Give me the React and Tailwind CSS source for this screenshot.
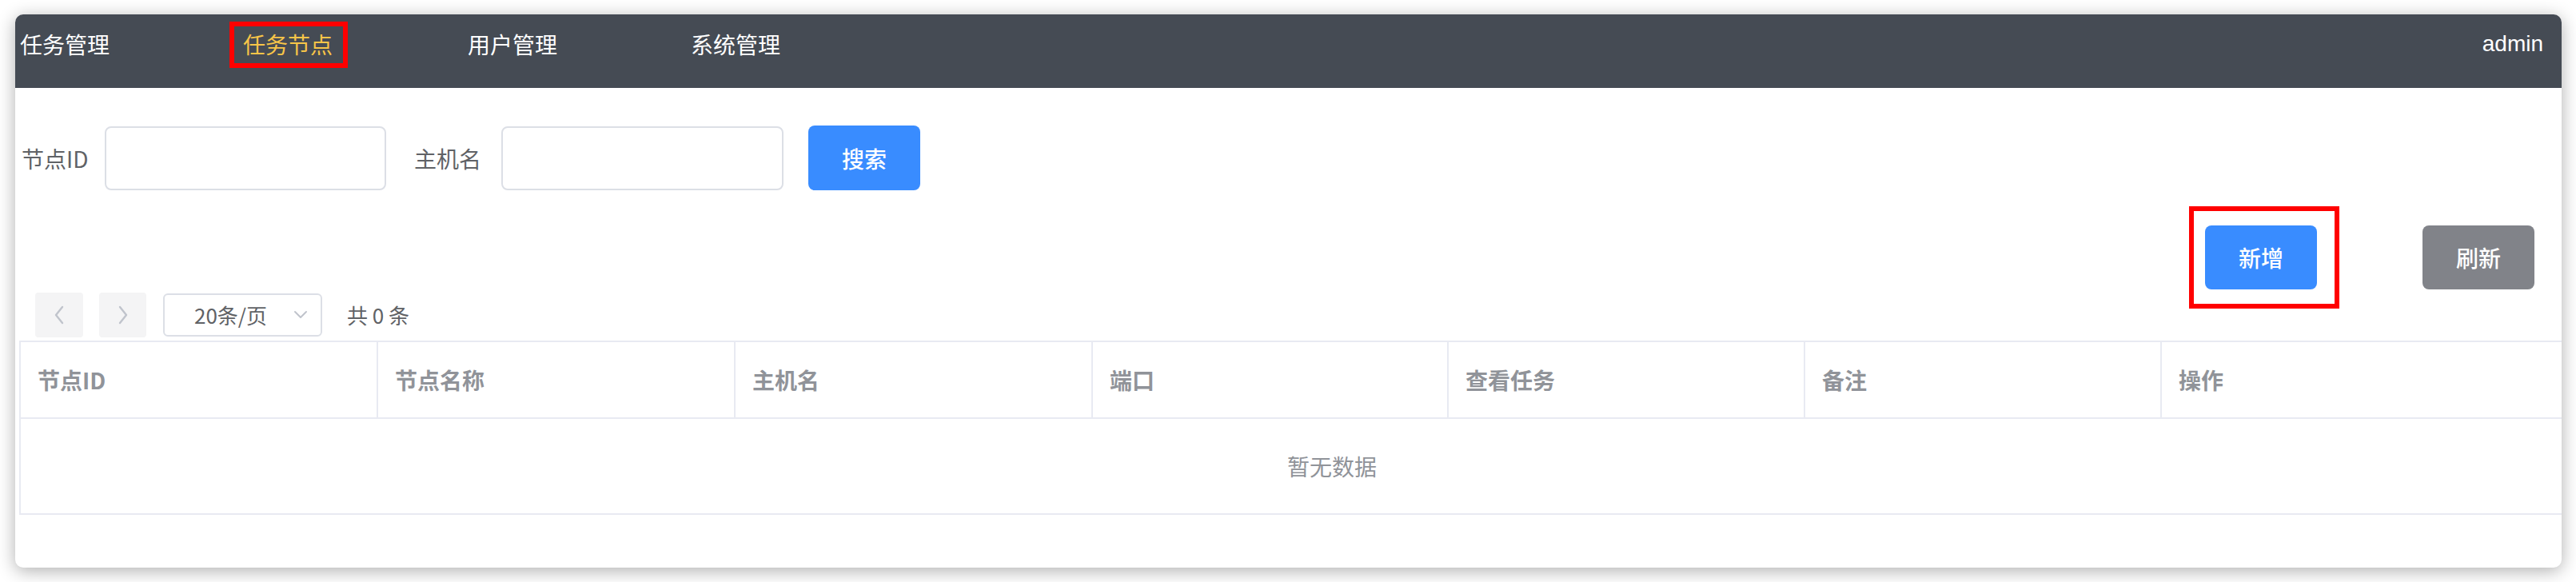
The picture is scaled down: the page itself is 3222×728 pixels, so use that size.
import React from 'react';

const navItems = [
  { label: '任务管理', w: 'w-[279px]' },
  { label: '任务节点', w: 'w-[281px]', active: true },
  { label: '用户管理', w: 'w-[279px]' },
  { label: '系统管理', w: 'w-[279px]' },
];

const columns = ['节点ID', '节点名称', '主机名', '端口', '查看任务', '备注', '操作'];

const Chevron = ({ dir }) => (
  <svg width="18" height="26" viewBox="0 0 18 26" fill="none">
    <path
      d={dir === 'left' ? 'M13 3 L5 13 L13 23' : 'M5 3 L13 13 L5 23'}
      stroke="#c0c4cc"
      strokeWidth="2.4"
      strokeLinecap="round"
      strokeLinejoin="round"
    />
  </svg>
);

export default function App() {
  return (
    <div className="min-h-screen bg-white pt-[18px] pl-[19px] font-['Noto_Sans_CJK_SC',sans-serif]">
      <div className="w-[3185px] h-[692px] rounded-[10px] bg-white overflow-hidden shadow-[0_4px_22px_rgba(0,0,0,0.32)]">
        {/* top nav */}
        <div className="h-[92px] bg-[#454b54] flex items-start pl-[6px] pr-[23px] pt-[19px]">
          {navItems.map((item) => (
            <div key={item.label} className={`${item.w} shrink-0`}>
              <span
                className={`relative inline-block text-[28px] leading-[36px] ${item.active ? 'text-[#f7c548]' : 'text-white'}`}
              >
                {item.label}
                {item.active && (
                  <span className="absolute -left-[17px] -top-[10px] -right-[19px] -bottom-[12px] border-[6px] border-[#ff0000]" />
                )}
              </span>
            </div>
          ))}
          <div className="ml-auto text-white text-[28px] leading-[36px] font-['Liberation_Sans',sans-serif]">admin</div>
        </div>

        {/* search form */}
        <div className="mt-[47px] flex items-center pl-[8px] text-[28px] text-[#606266]">
          <span className="w-[79px] leading-[36px] whitespace-nowrap">节点ID</span>
          <input className="ml-[25px] w-[352px] h-[80px] rounded-[8px] border-2 border-[#dcdfe6] outline-none px-4" />
          <span className="ml-[35px] w-[84px] leading-[36px] whitespace-nowrap">主机名</span>
          <input className="ml-[25px] w-[353px] h-[80px] rounded-[8px] border-2 border-[#dcdfe6] outline-none px-4" />
          <button className="ml-[31px] w-[140px] h-[81px] rounded-[8px] bg-[#398cff] text-white text-[28px] font-medium">
            搜索
          </button>
        </div>

        {/* action buttons */}
        <div className="mt-[44px] flex justify-end pr-[34px]">
          <div className="relative">
            <button className="w-[140px] h-[80px] rounded-[8px] bg-[#398cff] text-white text-[28px] font-medium">
              新增
            </button>
            <span className="absolute -left-[20px] -top-[24px] -right-[28px] -bottom-[24px] border-[6px] border-[#ff0000]" />
          </div>
          <button className="ml-[132px] w-[140px] h-[80px] rounded-[8px] bg-[#818389] text-white text-[28px] font-medium">
            刷新
          </button>
        </div>

        {/* pagination */}
        <div className="mt-[4px] flex items-center pl-[25px] text-[26px] text-[#606266]">
          <div className="w-[60px] h-[56px] rounded-[4px] bg-[#f4f4f5] flex items-center justify-center">
            <Chevron dir="left" />
          </div>
          <div className="ml-[20px] w-[59px] h-[56px] rounded-[4px] bg-[#f4f4f5] flex items-center justify-center">
            <Chevron dir="right" />
          </div>
          <div className="ml-[21px] w-[199px] h-[54px] rounded-[6px] border-2 border-[#dcdfe6] flex items-center pl-[37px] pr-[16px]">
            <span className="leading-[30px]">20条/页</span>
            <svg className="ml-auto" width="18" height="12" viewBox="0 0 18 12" fill="none">
              <path d="M2 2 L9 9 L16 2" stroke="#c0c4cc" strokeWidth="2" strokeLinecap="round" strokeLinejoin="round" />
            </svg>
          </div>
          <span className="ml-[31px] leading-[30px]">共 0 条</span>
        </div>

        {/* table */}
        <div className="mt-[4px] ml-[5px] w-[3282px] border-l-2 border-t-2 border-[#e8eaf2]">
          <div className="grid grid-cols-[447px_447px_447px_445px_446px_446px_1fr]">
            {columns.map((c) => (
              <div
                key={c}
                className="h-[96px] border-r-2 border-b-2 border-[#e8eaf2] flex items-center pl-[21px] text-[28px] font-bold text-[#909399]"
              >
                {c}
              </div>
            ))}
          </div>
          <div className="h-[120px] border-b-2 border-[#e8eaf2] flex items-center justify-center text-[28px] text-[#909399]">
            暂无数据
          </div>
        </div>
      </div>
    </div>
  );
}
